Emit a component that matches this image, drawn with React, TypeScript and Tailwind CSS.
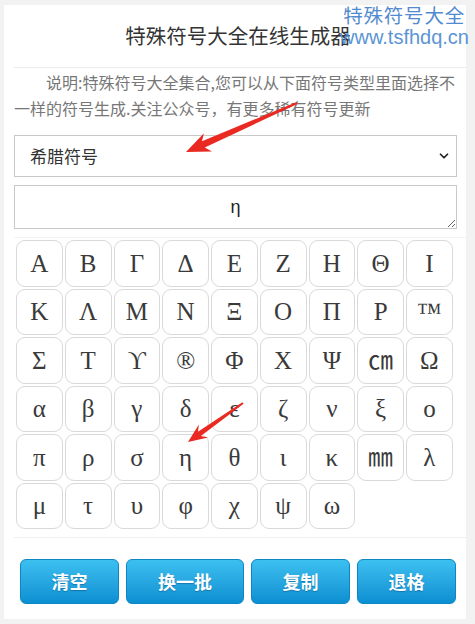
import { ChevronDown } from "lucide-react";

const rows: string[][] = [
  ["Α", "Β", "Γ", "Δ", "Ε", "Ζ", "Η", "Θ", "Ι"],
  ["Κ", "Λ", "Μ", "Ν", "Ξ", "Ο", "Π", "Ρ", "™"],
  ["Σ", "Τ", "ϒ", "®", "Φ", "Χ", "Ψ", "㎝", "Ω"],
  ["α", "β", "γ", "δ", "ε", "ζ", "ν", "ξ", "ο"],
  ["π", "ρ", "σ", "η", "θ", "ι", "κ", "㎜", "λ"],
  ["μ", "τ", "υ", "φ", "χ", "ψ", "ω"],
];

const actions = [
  { label: "清空", w: "w-[99px]" },
  { label: "换一批", w: "w-[118px]" },
  { label: "复制", w: "w-[99px]" },
  { label: "退格", w: "w-[99px]" },
];

// tapered red annotation arrow, tail -> tip
function arrowPoints(
  tx: number,
  ty: number,
  hx: number,
  hy: number,
  headLen: number,
  headW: number,
  tailW: number,
  neckW: number
) {
  const dx = hx - tx;
  const dy = hy - ty;
  const len = Math.hypot(dx, dy);
  const ux = dx / len;
  const uy = dy / len;
  const nx = -uy;
  const ny = ux;
  const bx = hx - ux * headLen;
  const by = hy - uy * headLen;
  const nbx = hx - ux * (headLen - 5);
  const nby = hy - uy * (headLen - 5);
  const pts = [
    [tx + (nx * tailW) / 2, ty + (ny * tailW) / 2],
    [nbx + (nx * neckW) / 2, nby + (ny * neckW) / 2],
    [bx + (nx * headW) / 2, by + (ny * headW) / 2],
    [hx, hy],
    [bx - (nx * headW) / 2, by - (ny * headW) / 2],
    [nbx - (nx * neckW) / 2, nby - (ny * neckW) / 2],
    [tx - (nx * tailW) / 2, ty - (ny * tailW) / 2],
  ];
  return pts.map((p) => p.join(",")).join(" ");
}

const App = () => {
  return (
    <div className="relative w-[475px] h-[624px] overflow-hidden bg-[#f2f2f2] pt-[5px] pl-[4px] font-['Noto_Sans_CJK_SC',sans-serif]">
      <div className="w-[462px] h-[614px] bg-white pl-[10px]">
        <h1 className="pt-[15px] pr-[4px] text-center text-[20.5px] leading-[30px] text-[#333]">
          特殊符号大全在线生成器
        </h1>
        <div className="mt-[17px] h-px bg-[#ececec]" />
        <p className="mt-[1px] pr-[2px] indent-[2em] text-[16px] leading-[26px] text-[#777]">
          说明:特殊符号大全集合,您可以从下面符号类型里面选择不一样的符号生成.关注公众号，有更多稀有符号更新
        </p>

        <div className="relative mt-[14px] w-[443px]">
          <select
            defaultValue="greek"
            className="h-[42px] w-full appearance-none border border-[#c9c9c9] bg-white pl-[15px] text-[17px] text-[#333] outline-none"
          >
            <option value="greek">希腊符号</option>
          </select>
          <ChevronDown
            size={14}
            strokeWidth={3}
            className="pointer-events-none absolute right-[6px] top-[14px] text-[#222]"
          />
        </div>

        <textarea
          readOnly
          value="η"
          className="mt-[8px] block h-[44px] w-[443px] border border-[#c9c9c9] pt-[9px] text-center text-[18px] leading-[24px] text-[#222] outline-none font-['Liberation_Sans',sans-serif]"
        />
        <div className="mt-[8px] h-px bg-[#f3f3f3]" />

        <div className="ml-[2px] mt-[2px] grid grid-cols-[repeat(9,46.75px)] auto-rows-[46.5px] gap-x-[2px] gap-y-[2px]">
          {rows.flat().map((s, i) => (
            <button
              key={i}
              className="flex items-center justify-center rounded-[9px] border border-[#d9d9d9] bg-white text-[25px] font-normal text-[#3a3a3a] font-['Liberation_Serif','Noto_Sans_CJK_SC',serif]"
            >
              {s}
            </button>
          ))}
        </div>

        <div className="mt-[8px] h-px bg-[#efefef]" />

        <div className="ml-[6px] mt-[21px] flex gap-[7px]">
          {actions.map((a) => (
            <button
              key={a.label}
              className={`${a.w} h-[45px] rounded-[6px] border border-[#0d86c4] bg-gradient-to-b from-[#3cc0f0] to-[#0a8fd2] text-[18px] font-bold text-white [text-shadow:0_1px_1px_rgba(0,60,110,0.4)]`}
            >
              {a.label}
            </button>
          ))}
        </div>
      </div>

      {/* watermark */}
      <div className="absolute right-[6px] top-[5px] text-right opacity-90">
        <div className="pr-[4px] text-[19.5px] leading-[20px] tracking-[0.8px] text-[#3f7ec9]">特殊符号大全</div>
        <div className="text-[20px] leading-[24px] text-[#4a8ad0] font-['Liberation_Sans',sans-serif]">
          www.tsfhdq.cn
        </div>
      </div>

      {/* red annotation arrows */}
      <svg className="pointer-events-none absolute left-0 top-0" width="475" height="624">
        <polygon points={arrowPoints(297, 103, 186, 152, 24, 20, 2, 7)} fill="#ea2a22" />
        <polygon points={arrowPoints(243, 403, 188, 442, 19, 16, 2, 5)} fill="#ea2a22" />
      </svg>
    </div>
  );
};

export default App;
